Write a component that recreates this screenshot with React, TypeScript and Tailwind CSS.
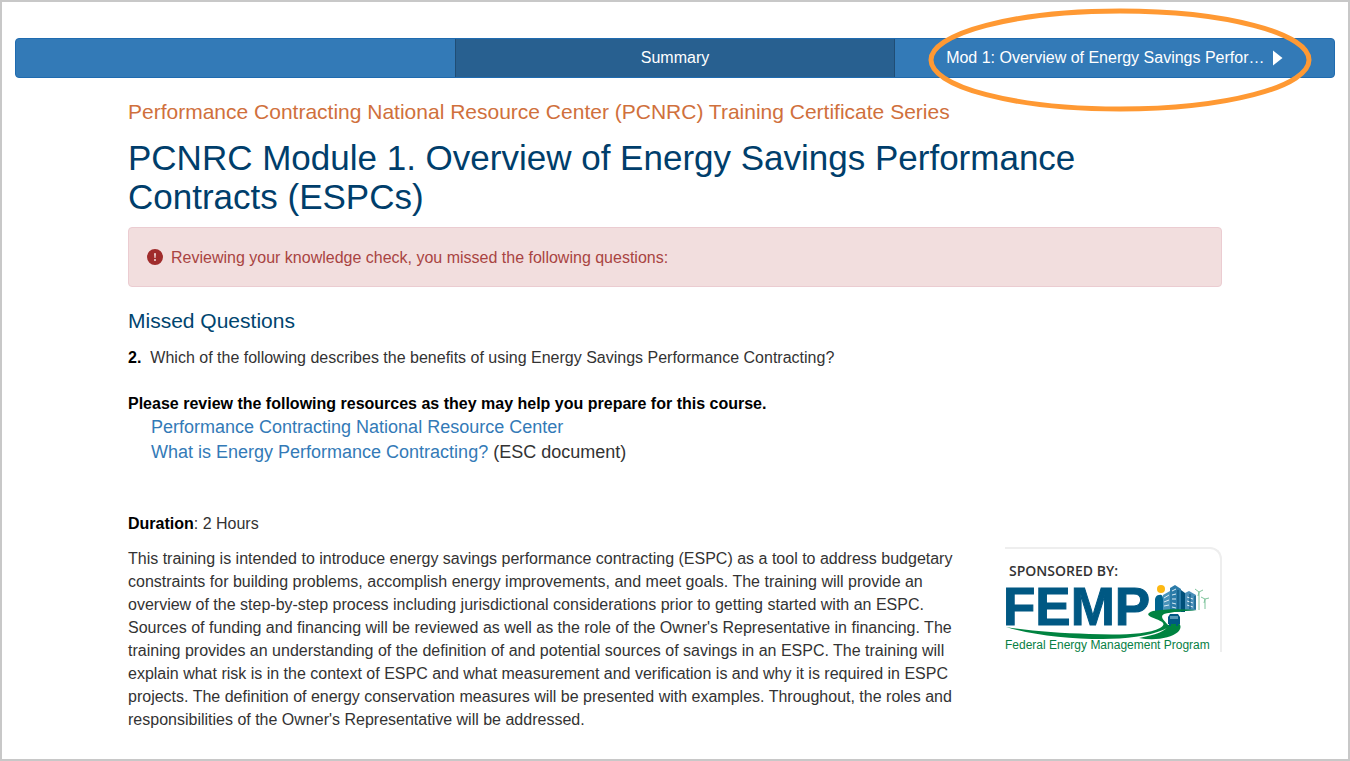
import { BsExclamationCircleFill } from "react-icons/bs";

const resources = [
  { label: "Performance Contracting National Resource Center", note: "" },
  { label: "What is Energy Performance Contracting?", note: " (ESC document)" },
];

const missedQuestions = [
  {
    number: 2,
    text: "Which of the following describes the benefits of using Energy Savings Performance Contracting?",
  },
];

const ModuleNav = () => {
  return (
    <nav className="relative mx-3 grid h-10 grid-cols-3 rounded border border-[#1f6bb0] bg-[#337ab7] text-base text-white">
      <div />
      <a
        href="#summary"
        className="flex items-center justify-center border-x border-[#204d74] bg-[#286090]"
      >
        Summary
      </a>
      <a href="#module-1" className="flex items-center justify-center gap-2">
        <span>Mod 1: Overview of Energy Savings Perfor…</span>
        <svg viewBox="0 0 10 16" className="h-4 w-[10px]" fill="currentColor">
          <path d="M0 0.5 L9.5 8 L0 15.5 Z" />
        </svg>
      </a>
      {/* highlight around the next module link */}
      <svg
        viewBox="0 0 386 106"
        className="pointer-events-none absolute -top-8 right-[21px] h-[106px] w-[386px]"
        fill="none"
      >
        <ellipse cx="193" cy="53" rx="189" ry="49" stroke="#ff9933" strokeWidth="5" />
      </svg>
    </nav>
  );
};

const FempLogo = () => {
  return (
    <svg
      viewBox="-4 0 212 71"
      className="-ml-1 h-[71px] w-[212px] overflow-visible"
      role="img"
      aria-label="FEMP Federal Energy Management Program"
    >
      <text
        x="-2"
        y="44"
        fill="#005883"
        stroke="#005883"
        strokeWidth="1"
        className="font-['Liberation_Sans',Arial,sans-serif] text-[53px] font-bold"
      >
        FEMP
      </text>
      <circle cx="156" cy="8" r="4" fill="#fdb813" />
      {/* skyline */}
      <path d="M150 30 V18 Q151 14 154 14 Q158 13 158 18 V30 Z" fill="#00648f" />
      <path d="M158 31 V14 L165 10 V31 Z" fill="#4a93ba" />
      <path d="M165 31 V7 L170 4 L176 8 V31 Z" fill="#2b7ba8" />
      <path d="M176 31 V9 L180 12 V31 Z" fill="#00507a" />
      <path d="M180 30 V12 L184 10 L191 14 V29 Z" fill="#4a8fb8" />
      <path
        d="M159 17 L164 14 M159 21 L164 19 M159 25 L164 24 M167 10 L171 8 M167 14 L171 13 M167 18 L171 18 M167 22 L171 23 M167 26 L171 27 M182 16 L188 18 M182 20 L188 22 M182 24 L188 26"
        stroke="#dcecf4"
        strokeWidth="1"
      />
      <path
        d="M173 9 V29 M185 13 V28 M190 15 V28"
        stroke="#00507a"
        strokeWidth="1"
      />
      {/* wind turbines */}
      <path
        d="M194 29 V11 L190 8 M194 11 L198 9 M194 11 L193 15 M200 28 V18 L196 16 M200 18 L204 17 M200 18 L199 22"
        fill="none"
        stroke="#7fc49c"
        strokeWidth="1"
      />
      {/* road */}
      <path
        d="M192 29 C176 28 160 28 148 30 C142 32 142 34 146 36 C156 40 163 42 155 47 C142 54 112 54 84 53 C54 52 24 50 1 46 C28 54 64 58 98 58 C120 58 144 55 158 49 C162 47 165 46 163 44 C160 40 154 36 159 33 C166 31 180 30 192 29 Z"
        fill="#008340"
      />
      <path d="M163 44 C162 50 150 54 134 57 C150 60 166 57 173 51 C177 47 176 43 172 41 Z" fill="#008340" />
      <path
        d="M165 33 H173 L175 36 V43 H173 V45 H171 V43 H166 V45 H164 V43 H163 V36 Z"
        fill="#005883"
      />
      <path d="M165 35 H173 V38 H165 Z" fill="#5799b7" />
      <text
        x="0"
        y="68"
        fill="#078044"
        className="font-['Liberation_Sans',Arial,sans-serif] text-[12px]"
      >
        Federal Energy Management Program
      </text>
    </svg>
  );
};

const Sponsor = () => {
  return (
    <aside className="w-[217px] shrink-0 self-start rounded-tr-xl border-t-2 border-r-2 border-[#eeeeee]">
      <p className="mt-3 ml-1 font-['Open_Sans',sans-serif] text-sm leading-5 font-semibold text-[#333333]">
        SPONSORED BY:
      </p>
      <FempLogo />
    </aside>
  );
};

const App = () => {
  return (
    <div className="border-2 border-[#c8c8c8] bg-white px-px pt-9 pb-7 font-['Liberation_Sans',Arial,sans-serif] text-base leading-[23px] text-[#333333]">
      <ModuleNav />
      <main className="mx-[125px] mt-5">
        <p className="text-[21px] leading-7 text-[#d0703c]">
          Performance Contracting National Resource Center (PCNRC) Training Certificate Series
        </p>
        <h1 className="mt-3 text-[35px] leading-[39px] text-[#003e6b]">
          PCNRC Module 1. Overview of Energy Savings Performance Contracts (ESPCs)
        </h1>
        <div
          role="alert"
          className="mt-[11px] flex h-[60px] items-center gap-2 rounded border border-[#ebccd1] bg-[#f2dede] px-[18px] text-[#a94442]"
        >
          <BsExclamationCircleFill className="size-4 text-[#a02c2c]" />
          <span>Reviewing your knowledge check, you missed the following questions:</span>
        </div>

        <h2 className="mt-5 text-[21px] leading-[27px] text-[#00456f]">Missed Questions</h2>
        {missedQuestions.map((question) => (
          <p key={question.number} className="mt-3 flex gap-[9px]">
            <b className="text-black">{question.number}.</b>
            <span>{question.text}</span>
          </p>
        ))}

        <p className="mt-[23px] font-bold text-black">
          Please review the following resources as they may help you prepare for this course.
        </p>
        <ul className="pl-[23px] text-lg leading-[25px]">
          {resources.map((resource) => (
            <li key={resource.label}>
              <a href="#resource" className="text-[#337ab7]">
                {resource.label}
              </a>
              {resource.note}
            </li>
          ))}
        </ul>

        <div className="mt-[47px] flex justify-between">
          <div className="max-w-[845px]">
            <p>
              <b className="text-black">Duration</b>: 2 Hours
            </p>
            <p className="mt-3">
              This training is intended to introduce energy savings performance contracting (ESPC)
              as a tool to address budgetary constraints for building problems, accomplish energy
              improvements, and meet goals. The training will provide an overview of the
              step-by-step process including jurisdictional considerations prior to getting started
              with an ESPC. Sources of funding and financing will be reviewed as well as the role of
              the Owner's Representative in financing. The training provides an understanding of the
              definition of and potential sources of savings in an ESPC. The training will explain
              what risk is in the context of ESPC and what measurement and verification is and why
              it is required in ESPC projects. The definition of energy conservation measures will
              be presented with examples. Throughout, the roles and responsibilities of the Owner's
              Representative will be addressed.
            </p>
          </div>
          <div className="pt-[35px]">
            <Sponsor />
          </div>
        </div>
      </main>
    </div>
  );
};

export default App;
